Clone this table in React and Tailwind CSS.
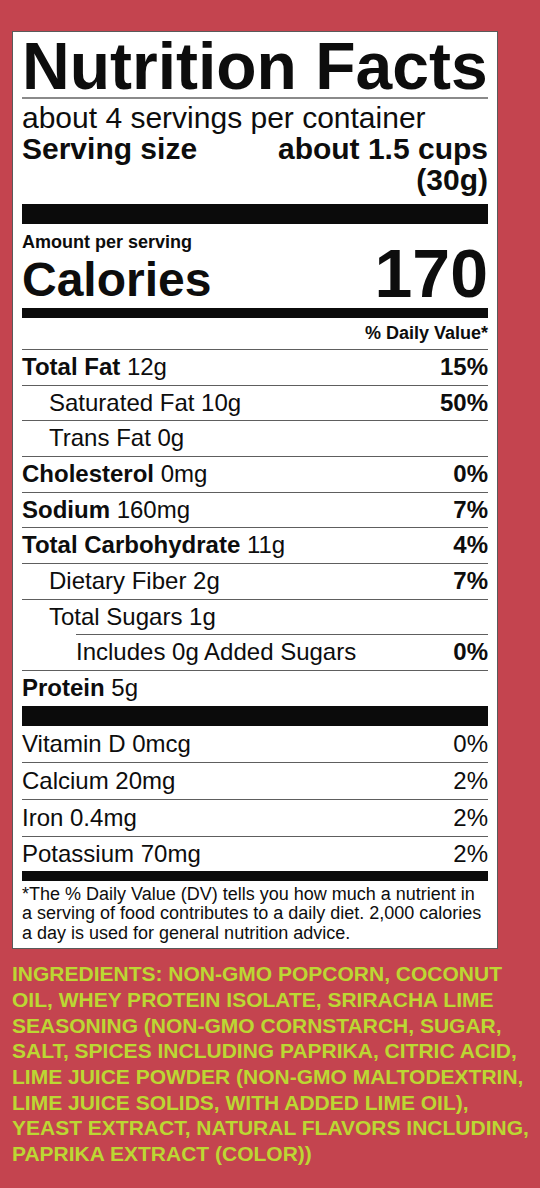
const nutrients = [
  { name: "Total Fat", amount: "12g", dv: "15%", bold: true },
  { name: "Saturated Fat", amount: "10g", dv: "50%", indent: 1 },
  { name: "Trans Fat", amount: "0g", indent: 1 },
  { name: "Cholesterol", amount: "0mg", dv: "0%", bold: true },
  { name: "Sodium", amount: "160mg", dv: "7%", bold: true },
  { name: "Total Carbohydrate", amount: "11g", dv: "4%", bold: true },
  { name: "Dietary Fiber", amount: "2g", dv: "7%", indent: 1 },
  { name: "Total Sugars", amount: "1g", indent: 1 },
  { name: "Includes 0g Added Sugars", dv: "0%", indent: 2 },
  { name: "Protein", amount: "5g", bold: true },
];

const vitamins = [
  { name: "Vitamin D 0mcg", dv: "0%" },
  { name: "Calcium 20mg", dv: "2%" },
  { name: "Iron 0.4mg", dv: "2%" },
  { name: "Potassium 70mg", dv: "2%" },
];

function NutrientRow({ row }) {
  // indent 2 moves the divider line in as well
  const wrap =
    row.indent === 2
      ? "ml-[54px]"
      : row.indent === 1
      ? "pl-[27px]"
      : "";
  return (
    <div className={`flex justify-between border-t border-[#5e5e5e] text-[24px] leading-[34.67px] ${wrap}`}>
      <span>
        {row.bold ? <span className="font-bold">{row.name}</span> : row.name}
        {row.amount && <span> {row.amount}</span>}
      </span>
      {row.dv && <span className="font-bold">{row.dv}</span>}
    </div>
  );
}

export default function App() {
  return (
    <div className="min-h-screen w-full bg-[#c4444f] pt-[31px] font-['Liberation_Sans',Arial,sans-serif] text-[#0d0d0d]">
      {/* label */}
      <div className="ml-[12px] w-[486px] border border-[#5a5a5a] bg-white px-[9px] pb-[5px]">
        <h1 className="border-b-2 border-[#8a8a8a] pt-[3px] text-[66px] font-bold leading-[62px]">
          Nutrition Facts
        </h1>

        <div className="pt-[3px] text-[30px] leading-[31px]">
          <p>about 4 servings per container</p>
          <div className="flex justify-between font-bold">
            <span>Serving size</span>
            <span className="text-right">
              about 1.5 cups
              <br />
              (30g)
            </span>
          </div>
        </div>

        <div className="mt-[9px] h-[20px] bg-[#0b0b0b]" />

        <div className="flex items-end justify-between font-bold">
          <div>
            <p className="pt-[8px] text-[18px] leading-[20px]">Amount per serving</p>
            <p className="text-[48px] leading-[56px]">Calories</p>
          </div>
          <span className="text-[68px] leading-[69px]">170</span>
        </div>

        <div className="h-[10px] bg-[#0b0b0b]" />

        <p className="pt-[5px] pb-[6px] text-right text-[18px] font-bold leading-[20px]">
          % Daily Value*
        </p>

        {nutrients.map((row) => (
          <NutrientRow key={row.name} row={row} />
        ))}

        <div className="h-[20px] bg-[#0b0b0b]" />

        {vitamins.map((v, i) => (
          <div
            key={v.name}
            className={`flex justify-between text-[24px] ${
              i === vitamins.length - 1
                ? "leading-[34px]"
                : "border-b border-[#5e5e5e] leading-[36px]"
            }`}
          >
            <span>{v.name}</span>
            <span>{v.dv}</span>
          </div>
        ))}

        <div className="h-[10px] bg-[#0b0b0b]" />

        <p className="pt-[4px] text-[18px] leading-[19.5px]">
          *The % Daily Value (DV) tells you how much a nutrient in a serving of food
          contributes to a daily diet. 2,000 calories a day is used for general
          nutrition advice.
        </p>
      </div>

      {/* ingredients */}
      <p className="mt-[12px] pl-[12px] pr-[2px] text-[21px] font-bold leading-[25.7px] text-[#bcd733]">
        INGREDIENTS: NON-GMO POPCORN, COCONUT OIL, WHEY PROTEIN ISOLATE, SRIRACHA
        LIME SEASONING (NON-GMO CORNSTARCH, SUGAR, SALT, SPICES INCLUDING PAPRIKA,
        CITRIC ACID, LIME JUICE POWDER (NON-GMO MALTODEXTRIN, LIME JUICE SOLIDS,
        WITH ADDED LIME OIL), YEAST EXTRACT, NATURAL FLAVORS INCLUDING, PAPRIKA
        EXTRACT (COLOR))
      </p>
    </div>
  );
}
